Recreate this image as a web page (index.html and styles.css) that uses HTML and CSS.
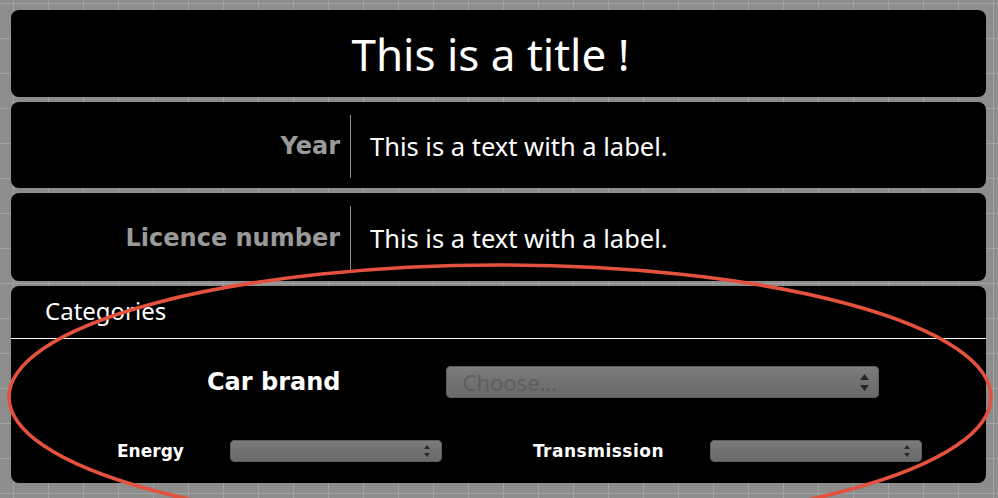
FILE: index.html
```html
<!DOCTYPE html>
<html>
<head>
<meta charset="utf-8">
<link rel="stylesheet" href="styles.css">
</head>
<body>
<div class="page">
  <div class="card title-card"><h1 class="title">This is a title !</h1></div>
  <div class="card field-card">
    <div class="field-label">Year</div>
    <div class="field-value">This is a text with a label.</div>
  </div>
  <div class="card field-card field-card-b">
    <div class="field-label">Licence number</div>
    <div class="field-value">This is a text with a label.</div>
  </div>
  <div class="card cat-card">
    <div class="cat-head">Categories</div>
    <div class="cat-body">
      <div class="cat-row cat-row-main">
        <span class="cat-label cat-label-big">Car brand</span>
        <div class="fake-select fake-select-big">
          <span class="placeholder">Choose...</span>
          <svg class="arrows" width="9" height="17" viewBox="0 0 9 17"><path d="M4.5 0 L9 6 L0 6 Z M0 11 L9 11 L4.5 17 Z" fill="#262626"/></svg>
        </div>
      </div>
      <div class="cat-row cat-row-small">
        <span class="cat-label cat-label-small">Energy</span>
        <div class="fake-select fake-select-small">
          <svg class="arrows" width="6" height="12" viewBox="0 0 6 12"><path d="M3 0 L6 4 L0 4 Z M0 8 L6 8 L3 12 Z" fill="#2a2a2a"/></svg>
        </div>
        <span class="cat-label cat-label-small cat-label-trans">Transmission</span>
        <div class="fake-select fake-select-small">
          <svg class="arrows" width="6" height="12" viewBox="0 0 6 12"><path d="M3 0 L6 4 L0 4 Z M0 8 L6 8 L3 12 Z" fill="#2a2a2a"/></svg>
        </div>
      </div>
    </div>
  </div>
</div>
<svg class="annotation" width="998" height="498" viewBox="0 0 998 498">
  <ellipse cx="500" cy="397" rx="491" ry="132" fill="none" stroke="#e4513f" stroke-width="3.6"/>
</svg>
</body>
</html>
```

FILE: styles.css
```css
html, body {
  margin: 0;
  padding: 0;
}
body {
  width: 998px;
  height: 498px;
  overflow: hidden;
  position: relative;
  background-color: #8d8d8d;
  background-image:
    linear-gradient(to right, #a2a2a2 1px, transparent 1px),
    linear-gradient(to bottom, #a2a2a2 1px, transparent 1px);
  background-size: 35px 35px;
  background-position: 13px 3px;
  font-family: "Noto Sans", "DejaVu Sans", sans-serif;
  color: #fff;
}
.page {
  display: flex;
  flex-direction: column;
  gap: 5px;
  padding: 10px 12px 0 11px;
}
.card {
  background: #000;
  border-radius: 8px;
}
.title-card {
  height: 87px;
  display: flex;
  align-items: center;
  justify-content: center;
}
.title {
  margin: 0;
  font-weight: normal;
  font-size: 44px;
  line-height: 1;
  padding-right: 16px;
}
.field-card {
  height: 86px;
  display: flex;
  align-items: stretch;
  padding: 13px 0 10px;
  box-sizing: border-box;
}
.field-card-b {
  height: 88px;
}
.field-label {
  width: 329px;
  padding-right: 10px;
  text-align: right;
  font-family: "DejaVu Sans", sans-serif;
  font-weight: bold;
  font-size: 24px;
  color: #9a9a9a;
  display: flex;
  align-items: center;
  justify-content: flex-end;
  border-right: 1px solid #8a8a8a;
  padding-bottom: 2px;
}
.field-value {
  padding-left: 19px;
  font-size: 25.5px;
  display: flex;
  align-items: center;
  padding-bottom: 2px;
}
.cat-card {
  height: 197px;
  display: flex;
  flex-direction: column;
}
.cat-head {
  height: 53px;
  box-sizing: border-box;
  border-bottom: 1px solid #fff;
  padding: 10px 0 0 34px;
  font-size: 24px;
  line-height: 30px;
}
.cat-body {
  padding-top: 27px;
  display: flex;
  flex-direction: column;
  gap: 42px;
}
.cat-row {
  display: flex;
  align-items: center;
}
.cat-row-main {
  padding-left: 196px;
  gap: 106px;
}
.cat-row-small {
  padding-left: 106px;
  gap: 46px;
}
.cat-label {
  font-family: "DejaVu Sans", sans-serif;
  font-weight: bold;
  color: #fff;
}
.cat-label-big {
  font-size: 24px;
}
.cat-label-small {
  font-size: 17px;
}
.cat-label-trans {
  margin-left: 45px;
  letter-spacing: 0.5px;
}
.fake-select {
  display: flex;
  align-items: center;
  box-sizing: border-box;
  border-radius: 5px;
  background: linear-gradient(to bottom, #7d7d7d 0%, #727272 45%, #6a6a6a 100%);
  box-shadow: inset 0 0 0 1px #5e5e5e;
}
.fake-select-big {
  width: 433px;
  height: 32px;
  padding: 0 10px 0 16px;
}
.fake-select-small {
  width: 212px;
  height: 22px;
  padding: 0 12px 0 10px;
}
.placeholder {
  font-size: 22px;
  color: #5e5e5e;
}
.arrows {
  margin-left: auto;
  display: block;
}
.annotation {
  position: absolute;
  left: 0;
  top: 0;
  pointer-events: none;
}
```
